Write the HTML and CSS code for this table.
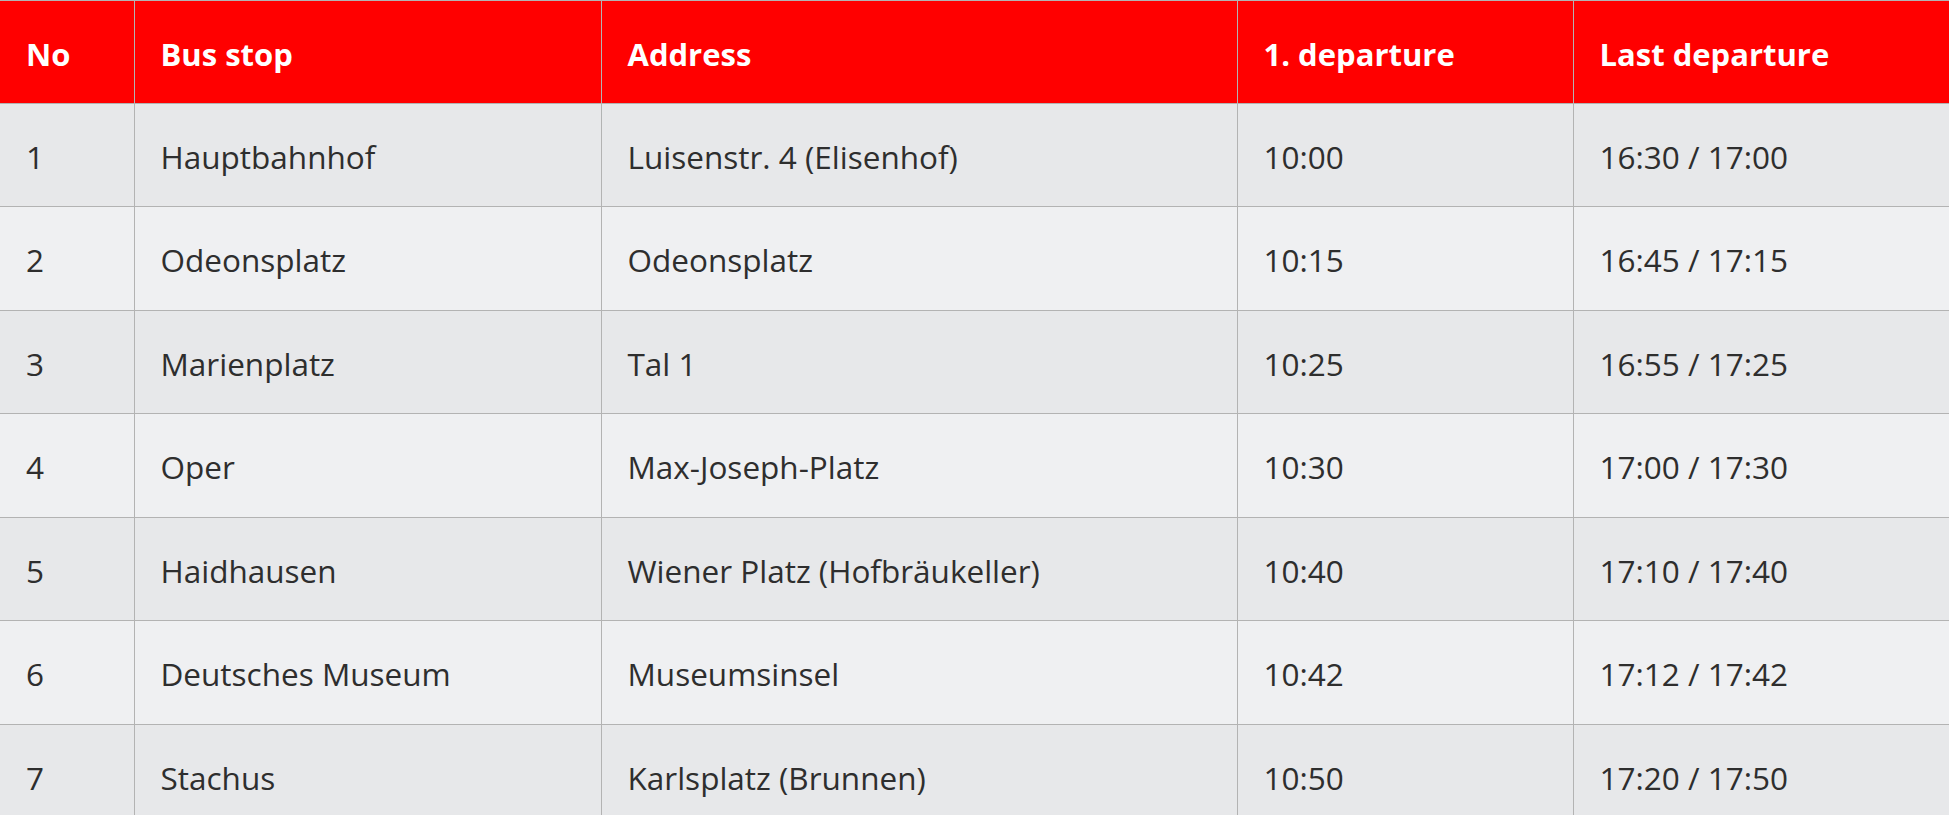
FILE: index.html
```html
<!DOCTYPE html>
<html lang="en">
<head>
<meta charset="utf-8">
<title>Bus stops</title>
<link rel="stylesheet" href="styles.css">
</head>
<body>
<table class="schedule">
  <colgroup>
    <col class="c-no">
    <col class="c-stop">
    <col class="c-addr">
    <col class="c-first">
    <col class="c-last">
  </colgroup>
  <thead>
    <tr>
      <th>No</th>
      <th>Bus stop</th>
      <th>Address</th>
      <th>1. departure</th>
      <th>Last departure</th>
    </tr>
  </thead>
  <tbody>
    <tr><td>1</td><td>Hauptbahnhof</td><td>Luisenstr. 4 (Elisenhof)</td><td>10:00</td><td>16:30 / 17:00</td></tr>
    <tr><td>2</td><td>Odeonsplatz</td><td>Odeonsplatz</td><td>10:15</td><td>16:45 / 17:15</td></tr>
    <tr><td>3</td><td>Marienplatz</td><td>Tal 1</td><td>10:25</td><td>16:55 / 17:25</td></tr>
    <tr><td>4</td><td>Oper</td><td>Max-Joseph-Platz</td><td>10:30</td><td>17:00 / 17:30</td></tr>
    <tr><td>5</td><td>Haidhausen</td><td>Wiener Platz (Hofbräukeller)</td><td>10:40</td><td>17:10 / 17:40</td></tr>
    <tr><td>6</td><td>Deutsches Museum</td><td>Museumsinsel</td><td>10:42</td><td>17:12 / 17:42</td></tr>
    <tr><td>7</td><td>Stachus</td><td>Karlsplatz (Brunnen)</td><td>10:50</td><td>17:20 / 17:50</td></tr>
  </tbody>
</table>
</body>
</html>
```
FILE: styles.css
```css
html, body {
  margin: 0;
  padding: 0;
  background: #eff0f2;
}
body {
  font-family: "Open Sans", "Noto Sans", sans-serif;
  font-size: 31.5px;
  color: #2e2e2e;
  overflow: hidden;
}
.schedule {
  width: 100%;
  table-layout: fixed;
  border-collapse: collapse;
  border-top: 1px solid #b0b0b0;
}
.c-no { width: 134px; }
.c-stop { width: 467px; }
.c-addr { width: 636px; }
.c-first { width: 336px; }
.c-last { width: auto; }
.schedule th,
.schedule td {
  text-align: left;
  padding: 31px 26px 27px;
  line-height: 44.5px;
  border: 1px solid #b3b3b3;
  white-space: nowrap;
}
.schedule th:first-child,
.schedule td:first-child { border-left: 0; }
.schedule th:last-child,
.schedule td:last-child { border-right: 0; }
.schedule th {
  background: #ff0000;
  color: #ffffff;
  font-weight: 700;
  font-size: 31px;
  padding-top: 31px;
  padding-bottom: 26px;
}
.schedule tbody tr:nth-child(odd) td { background: #e7e8ea; }
.schedule tbody tr:nth-child(even) td { background: #eff0f2; }
```
